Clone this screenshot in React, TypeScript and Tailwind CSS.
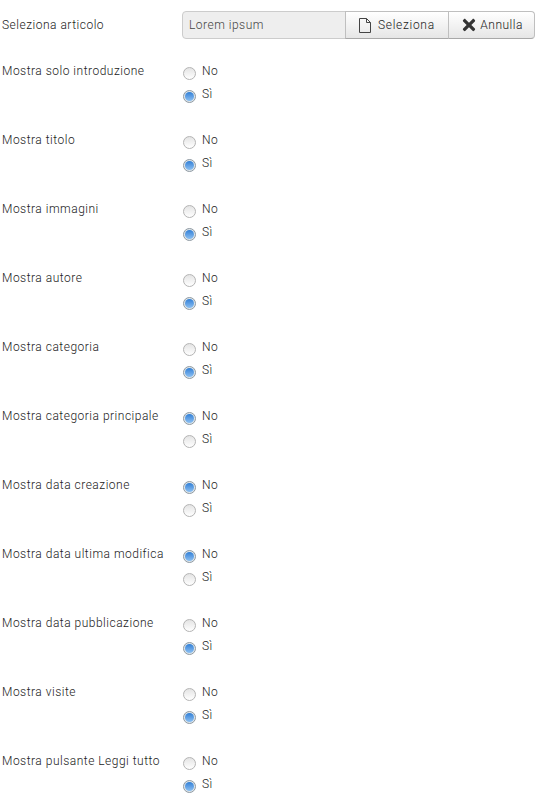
import { FaTimes } from 'react-icons/fa';

const fields = [
  { label: 'Mostra solo introduzione', value: 'si' },
  { label: 'Mostra titolo', value: 'si' },
  { label: 'Mostra immagini', value: 'si' },
  { label: 'Mostra autore', value: 'si' },
  { label: 'Mostra categoria', value: 'si' },
  { label: 'Mostra categoria principale', value: 'no' },
  { label: 'Mostra data creazione', value: 'no' },
  { label: 'Mostra data ultima modifica', value: 'no' },
  { label: 'Mostra data pubblicazione', value: 'si' },
  { label: 'Mostra visite', value: 'si' },
  { label: 'Mostra pulsante Leggi tutto', value: 'si' },
];

function Radio({ checked }: { checked: boolean }) {
  if (checked) {
    return (
      <span className="mt-[4px] flex h-[13px] w-[13px] shrink-0 items-center justify-center rounded-full border border-[#8f9aa3] bg-[#dfe6ea]">
        <span className="h-[9px] w-[9px] rounded-full bg-gradient-to-b from-[#2f7fd6] to-[#8cc0f2]" />
      </span>
    );
  }
  return (
    <span className="mt-[4px] h-[13px] w-[13px] shrink-0 rounded-full border border-[#b4b4b4] bg-gradient-to-b from-[#e4e4e4] to-[#ffffff]" />
  );
}

function Option({ text, checked }: { text: string; checked: boolean }) {
  return (
    <div className="flex h-[23px] items-start gap-[6px]">
      <Radio checked={checked} />
      <span className="leading-[16px]">{text}</span>
    </div>
  );
}

export default function App() {
  return (
    <div className="h-[799px] w-[543px] overflow-hidden bg-white font-['Roboto',sans-serif] text-[12px] font-light tracking-[0.5px] text-[#222222]">
      <div className="flex h-[63px] items-start pt-[11px]">
        <label className="w-[182px] pl-[2px] pt-[6px] leading-[16px]">Seleziona articolo</label>
        <div className="flex h-[28px] w-[353px]">
          <div className="flex w-[164px] items-center rounded-l-[4px] border border-[#cccccc] bg-[#eeeeee] pl-[6px] text-[#444444]">
            Lorem ipsum
          </div>
          <button className="-ml-px flex w-[105px] items-center justify-center gap-[7px] border border-[#bfbfbf] border-b-[#a8a8a8] bg-gradient-to-b from-[#ffffff] to-[#e6e6e6] tracking-[0.7px]">
            <svg width="12" height="15" viewBox="0 0 12 15" fill="none" stroke="#444444" strokeWidth="1">
              <path d="M0.5 0.5H7.5L11.5 4.5V14.5H0.5Z M7.5 0.5V4.5H11.5" />
            </svg>
            Seleziona
          </button>
          <button className="-ml-px flex w-[87px] items-center justify-center gap-[2px] rounded-r-[4px] border border-[#bfbfbf] border-b-[#a8a8a8] bg-gradient-to-b from-[#ffffff] to-[#e6e6e6]">
            <FaTimes className="h-[18px] w-[18px] text-[#333333]" />
            Annulla
          </button>
        </div>
      </div>
      {fields.map((f) => (
        <div key={f.label} className="flex h-[69px] items-start">
          <label className="w-[183px] pl-[2px] leading-[16px]">{f.label}</label>
          <div className="flex flex-col">
            <Option text="No" checked={f.value === 'no'} />
            <Option text="Sì" checked={f.value === 'si'} />
          </div>
        </div>
      ))}
    </div>
  );
}
